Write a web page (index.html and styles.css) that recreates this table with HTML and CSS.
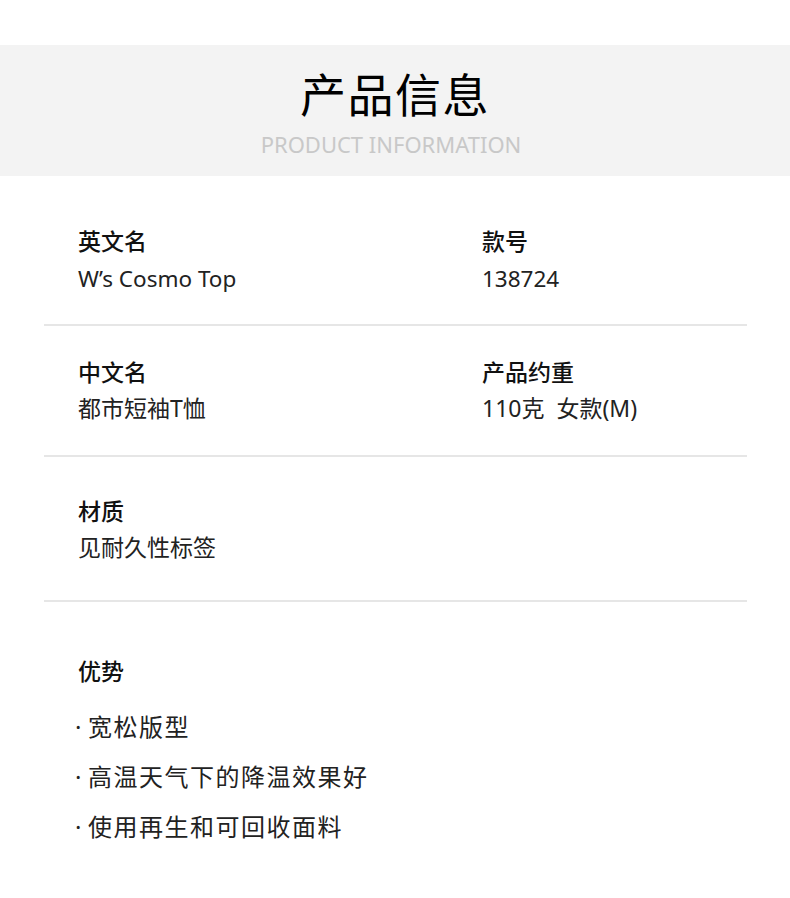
FILE: index.html
```html
<!DOCTYPE html>
<html lang="zh-CN">
<head>
  <meta charset="UTF-8">
  <meta name="viewport" content="width=device-width, initial-scale=1.0">
  <title>产品信息</title>
  <link rel="stylesheet" href="styles.css">
</head>
<body>
  <div class="header">
    <h1>产品信息</h1>
    <p class="subtitle">PRODUCT INFORMATION</p>
  </div>

  <div class="info">
    <div class="info-row first">
      <div class="info-item">
        <h3>英文名</h3>
        <p>W’s Cosmo Top</p>
      </div>
      <div class="info-item">
        <h3>款号</h3>
        <p>138724</p>
      </div>
    </div>
    <div class="info-row second">
      <div class="info-item">
        <h3>中文名</h3>
        <p>都市短袖T恤</p>
      </div>
      <div class="info-item">
        <h3>产品约重</h3>
        <p>110克&nbsp; 女款(M)</p>
      </div>
    </div>
    <div class="info-row third">
      <div class="info-item">
        <h3>材质</h3>
        <p>见耐久性标签</p>
      </div>
    </div>
  </div>

  <div class="features">
    <h3>优势</h3>
    <ul>
      <li>宽松版型</li>
      <li>高温天气下的降温效果好</li>
      <li>使用再生和可回收面料</li>
    </ul>
  </div>
</body>
</html>
```

FILE: styles.css
```css
* {
  margin: 0;
  padding: 0;
  box-sizing: border-box;
}

body {
  font-family: "Noto Sans", "Noto Sans CJK SC", sans-serif;
  background: #ffffff;
  color: #111111;
  padding-top: 45px;
}

.header {
  background: #f3f3f3;
  height: 131px;
  text-align: center;
  padding-top: 12px;
}

.header h1 {
  font-family: "Noto Sans CJK SC", sans-serif;
  font-size: 46px;
  font-weight: 400;
  line-height: 70px;
  color: #000000;
  letter-spacing: 1.5px;
}

.subtitle {
  font-size: 22px;
  line-height: 30px;
  margin-top: 2px;
  padding-right: 8px;
  color: #c8c8c8;
}

.info {
  margin: 0 43px 0 44px;
}

.info-row {
  display: grid;
  grid-template-columns: 404px 1fr;
  padding: 28px 34px 29px;
  border-bottom: 2px solid #e6e6e6;
}

.info-row.first {
  padding-top: 47px;
  padding-bottom: 27px;
}

.info-row.third {
  padding-top: 36px;
  padding-bottom: 35px;
}

.info-item h3 {
  font-size: 23px;
  font-weight: 500;
  line-height: 36px;
  color: #111111;
}

.info-item p {
  font-size: 23px;
  line-height: 36px;
  color: #222222;
}

.info-row.first .info-item p {
  margin-top: 2px;
  font-size: 22.5px;
}

.features {
  padding: 51px 0 0 75px;
}

.features h3 {
  font-size: 23px;
  font-weight: 500;
  line-height: 36px;
  margin-left: 3px;
  margin-bottom: 13px;
}

.features ul {
  list-style: none;
}

.features li {
  font-size: 24px;
  line-height: 50px;
  letter-spacing: 1.5px;
  color: #222222;
}

.features li::before {
  content: "·";
  margin-right: 5px;
}
```
